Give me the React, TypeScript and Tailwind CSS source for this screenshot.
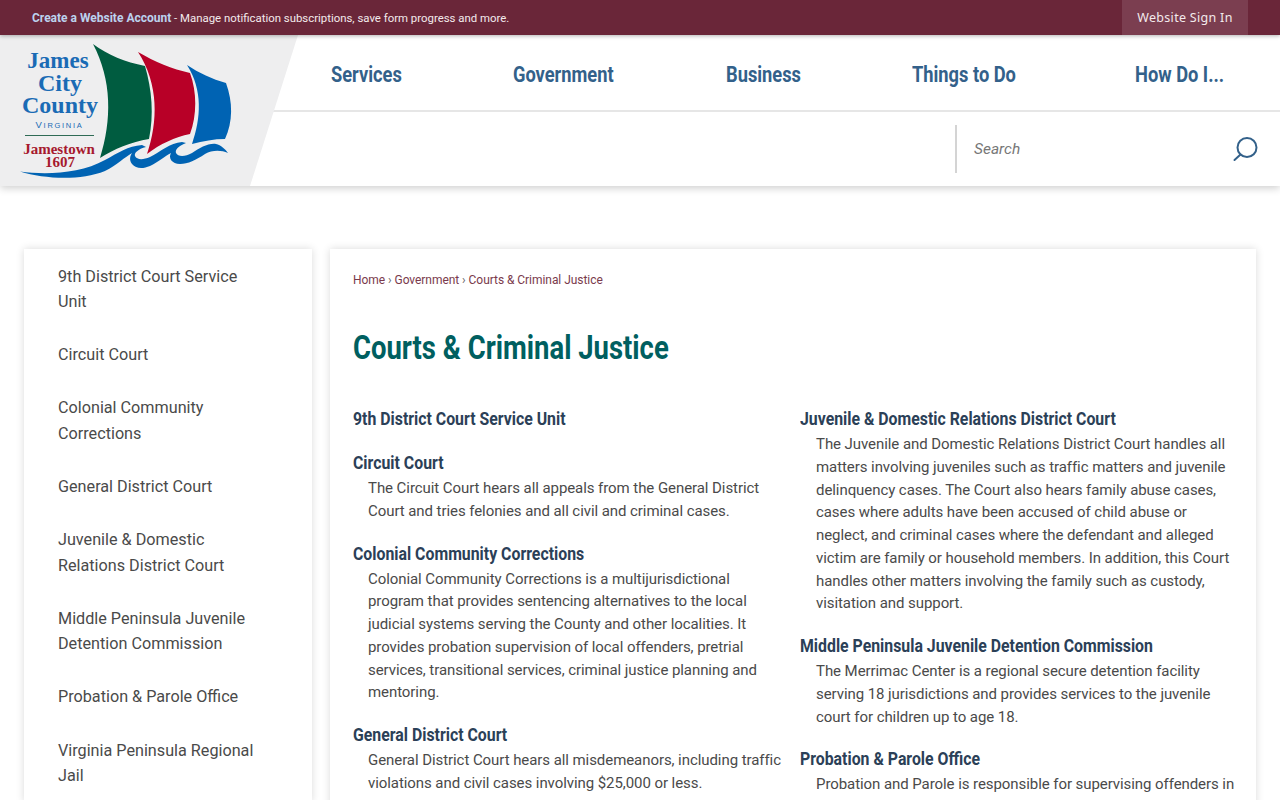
const sideLinks = [
  ["9th District Court Service", "Unit"],
  ["Circuit Court"],
  ["Colonial Community", "Corrections"],
  ["General District Court"],
  ["Juvenile & Domestic", "Relations District Court"],
  ["Middle Peninsula Juvenile", "Detention Commission"],
  ["Probation & Parole Office"],
  ["Virginia Peninsula Regional", "Jail"],
];

const leftColumn = [
  { title: "9th District Court Service Unit", lines: [] },
  {
    title: "Circuit Court",
    lines: [
      "The Circuit Court hears all appeals from the General District",
      "Court and tries felonies and all civil and criminal cases.",
    ],
  },
  {
    title: "Colonial Community Corrections",
    lines: [
      "Colonial Community Corrections is a multijurisdictional",
      "program that provides sentencing alternatives to the local",
      "judicial systems serving the County and other localities. It",
      "provides probation supervision of local offenders, pretrial",
      "services, transitional services, criminal justice planning and",
      "mentoring.",
    ],
  },
  {
    title: "General District Court",
    lines: [
      "General District Court hears all misdemeanors, including traffic",
      "violations and civil cases involving $25,000 or less.",
    ],
  },
];

const rightColumn = [
  {
    title: "Juvenile & Domestic Relations District Court",
    lines: [
      "The Juvenile and Domestic Relations District Court handles all",
      "matters involving juveniles such as traffic matters and juvenile",
      "delinquency cases. The Court also hears family abuse cases,",
      "cases where adults have been accused of child abuse or",
      "neglect, and criminal cases where the defendant and alleged",
      "victim are family or household members. In addition, this Court",
      "handles other matters involving the family such as custody,",
      "visitation and support.",
    ],
  },
  {
    title: "Middle Peninsula Juvenile Detention Commission",
    lines: [
      "The Merrimac Center is a regional secure detention facility",
      "serving 18 jurisdictions and provides services to the juvenile",
      "court for children up to age 18.",
    ],
  },
  {
    title: "Probation & Parole Office",
    lines: ["Probation and Parole is responsible for supervising offenders in"],
  },
];

const navItems = [
  { label: "Services", className: "w-[72px] mr-[110px]" },
  { label: "Government", className: "w-[100px] mr-[113px]" },
  { label: "Business", className: "w-[74px] mr-[112px]" },
  { label: "Things to Do", className: "w-[103px] mr-[120px]" },
  { label: "How Do I...", className: "w-[86px]" },
];

function Logo() {
  return (
    <svg width="250" height="150" viewBox="0 36 250 150" className="block">
      <path d="M93 44 C108 55 125 62 145 66 C152 90 154 115 149 139 C131 142 114 149 100 158 C112 120 112 80 93 44Z" fill="#005c40" />
      <path d="M138 52 C155 62 172 69 190 73 C197 92 197 115 190 134 C175 137 160 144 147 154 C158 122 159 84 138 52Z" fill="#b80027" />
      <path d="M187 65 C199 73 212 79 226 83 C233 102 233 122 225 139 C214 139 203 141 192 144 C201 118 203 90 187 65Z" fill="#0063b3" />
      <path d="M20 171.5 C45 175 80 174 105 160 C118 153 128 146 142 145 L146 147 C138 149 134 153 135 156 C137 160 143 160 150 157 C160 152 170 143 182 142 L186 143 C178 146 175 150 176 153 C178 157 185 157 192 153 C200 148 208 143 216 144 C221 145 225 149 228 153 C221 150 212 150 205 154 C196 160 188 164 180 164 C172 164 168 158 171 153 C165 156 158 162 150 166 C143 169 136 169 132 164 C129 160 130 156 132 153 C125 157 117 165 105 171 C80 181 45 179 20 171.5Z" fill="#0063b3" />
      <g fontFamily="'Liberation Serif', serif" fontWeight="700" textAnchor="middle">
        <text x="58" y="68" fontSize="23" fill="#1a6bb5">James</text>
        <text x="60" y="91" fontSize="24" fill="#1a6bb5">City</text>
        <text x="60" y="113" fontSize="24" fill="#1a6bb5">County</text>
        <text x="59.5" y="128" fontSize="9.5" fontFamily="'Liberation Sans', sans-serif" fontWeight="400" letterSpacing="1.7" fill="#1a6bb5">
          V<tspan fontSize="7.5">IRGINIA</tspan>
        </text>
        <text x="59" y="154" fontSize="15" fill="#a6192e">Jamestown</text>
        <text x="60" y="167" fontSize="15" fill="#a6192e">1607</text>
      </g>
      <rect x="25" y="135" width="69" height="1" fill="#2f6b55" />
    </svg>
  );
}

function SearchIcon() {
  return (
    <svg width="26" height="26" viewBox="0 0 26 26" fill="none" stroke="#33618a" strokeWidth="2" strokeLinecap="round">
      <circle cx="15" cy="11.5" r="9.5" />
      <path d="M8.5 18.5 L2.5 24" />
    </svg>
  );
}

function Section({ title, lines, indent }: { title: string; lines: string[]; indent: string }) {
  return (
    <div className={lines.length ? "mb-[18px]" : "mb-[19px]"}>
      <h2 className="h-[25px] origin-left scale-x-[0.88] text-[18px] leading-[25px] font-bold text-[#2b4057] whitespace-nowrap">
        {title}
      </h2>
      {lines.length > 0 && (
        <p className={`mt-[2px] ${indent} text-[15px] leading-[22.75px] tracking-[-0.07px] text-[#4a4a4a] whitespace-nowrap`}>
          {lines.map((line) => (
            <span key={line} className="block">{line}</span>
          ))}
        </p>
      )}
    </div>
  );
}

export default function App() {
  return (
    <div className="h-[800px] overflow-hidden bg-white [font-family:Roboto,sans-serif]">
      <div className="relative z-20 flex h-[35px] items-center justify-between bg-[#6a2639] pl-[32px] pr-[32px] shadow-[0_1px_4px_rgba(0,0,0,0.3)]">
        <p className="pt-px text-[11.4px] text-[#f3eaec] whitespace-nowrap">
          <span className="text-[12px] font-bold text-[#bcd2ee]">Create a Website Account</span> - Manage notification subscriptions, save form progress and more.
        </p>
        <a className="flex h-[35px] w-[126px] items-center justify-center bg-[#7b3e50] pt-px text-[12.5px] tracking-[0.3px] text-[#f3eaec] [font-family:'Noto_Sans',sans-serif]">
          Website Sign In
        </a>
      </div>

      <header className="relative z-10 flex h-[151px] bg-white shadow-[0_2px_8px_rgba(0,0,0,0.2)]">
        <div className="relative z-10 h-[151px] w-[298px] shrink-0 bg-[#eeeeef] pt-px [clip-path:polygon(0_0,100%_0,250px_100%,0_100%)]">
          <Logo />
        </div>
        <div className="-ml-[48px] flex min-w-0 flex-1 flex-col">
          <nav className="flex h-[77px] items-center border-b-2 border-[#e6e6e6] pt-[4px] pl-[81px] text-[22px] font-bold text-[#33618a]">
            {navItems.map((item) => (
              <a key={item.label} className={`${item.className} shrink-0 origin-left scale-x-[0.83] whitespace-nowrap`}>
                {item.label}
              </a>
            ))}
          </nav>
          <div className="flex flex-1 items-center justify-end">
            <div className="flex h-[48px] w-[325px] items-center justify-between border-l-2 border-[#d4d4d4] pl-[17px] pr-[22px]">
              <span className="pt-[2px] text-[15.5px] italic text-[#777]">Search</span>
              <SearchIcon />
            </div>
          </div>
        </div>
      </header>

      <main className="flex items-start gap-[18px] px-[24px] pt-[63px]">
        <aside className="w-[288px] shrink-0 bg-white pt-[0.5px] shadow-[0_0_8px_rgba(0,0,0,0.15)]">
          {sideLinks.map((lines) => (
            <a key={lines[0]} className="block py-[14px] pl-[34px] text-[16.2px] leading-[25.3px] text-[#4a4a4a] whitespace-nowrap">
              {lines.map((line) => (
                <span key={line} className="block">{line}</span>
              ))}
            </a>
          ))}
        </aside>
        <section className="min-w-0 flex-1 bg-white px-[23px] pt-[23px] shadow-[0_0_8px_rgba(0,0,0,0.15)]">
          <div className="h-[16px] text-[12px] leading-[16px] tracking-[-0.05px] text-[#7a3a4c]">
            Home <span className="text-[#666]">›</span> Government <span className="text-[#666]">›</span> Courts &amp; Criminal Justice
          </div>
          <h1 className="mt-[40px] mb-[38px] h-[40px] origin-left scale-x-[0.845] text-[32.5px] leading-[40px] font-bold text-[#005f60] whitespace-nowrap">
            Courts &amp; Criminal Justice
          </h1>
          <div className="grid grid-cols-[447px_1fr]">
            <div>
              {leftColumn.map((s) => (
                <Section key={s.title} title={s.title} lines={s.lines} indent="pl-[15px]" />
              ))}
            </div>
            <div>
              {rightColumn.map((s) => (
                <Section key={s.title} title={s.title} lines={s.lines} indent="pl-[16px]" />
              ))}
            </div>
          </div>
        </section>
      </main>
    </div>
  );
}
